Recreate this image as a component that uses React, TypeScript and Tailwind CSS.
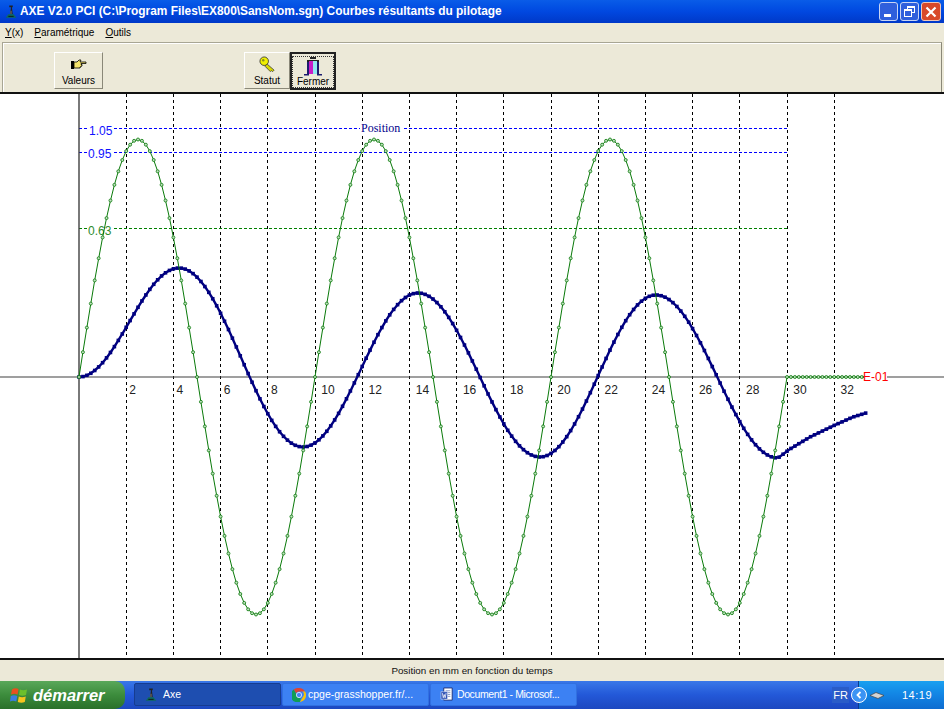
const GRID_X = 23.6;
const ORIGIN_X = 79;
const AXIS_Y = 377;
const STEP = 236 / 60;

// green curve: three sine periods, then flat to the end of the record
const greenPoints: [number, number][] = [];
for (let i = 0; i <= 200; i++) {
  const x = ORIGIN_X + i * STEP;
  if (x > 866) break;
  const y = x <= 787 ? AXIS_Y - 237.5 * Math.sin(((x - ORIGIN_X) / 236) * 2 * Math.PI) : AXIS_Y;
  greenPoints.push([x, y]);
}

// blue curve: read from its extrema, cosine between them
const extrema: [number, number][] = [
  [79, 377],
  [179, 268],
  [303, 447],
  [418, 293],
  [540, 457],
  [656, 295],
  [778, 458],
];
const tail: [number, number][] = [
  [778, 458],
  [790, 449],
  [810, 437],
  [835, 425],
  [853, 417],
  [866, 413],
];

function blueY(x: number) {
  if (x >= 778) {
    for (let i = 0; i < tail.length - 1; i++) {
      const [x0, y0] = tail[i];
      const [x1, y1] = tail[i + 1];
      if (x <= x1) return y0 + ((x - x0) / (x1 - x0)) * (y1 - y0);
    }
    return 413;
  }
  for (let i = 0; i < extrema.length - 1; i++) {
    const [x0, y0] = extrema[i];
    const [x1, y1] = extrema[i + 1];
    if (x <= x1) {
      const t = (x - x0) / (x1 - x0);
      return y0 + ((1 - Math.cos(t * Math.PI)) / 2) * (y1 - y0);
    }
  }
  return 413;
}

const bluePoints: [number, number][] = [];
for (let x = ORIGIN_X; x <= 866; x += STEP) bluePoints.push([x, blueY(x)]);

const toLine = (pts: [number, number][]) => pts.map(([x, y]) => `${x.toFixed(1)},${y.toFixed(1)}`).join(' ');

const ticks = Array.from({ length: 16 }, (_, i) => (i + 1) * 2);
const chartFont = { fontFamily: '"Liberation Sans", sans-serif' };

function Chart() {
  return (
    <svg viewBox="0 94 944 564" className="block w-full h-full">
      {ticks.map((t) => {
        const x = Math.floor(ORIGIN_X + t * GRID_X) + 0.5;
        return <line key={t} x1={x} x2={x} y1={94} y2={658} stroke="#000" strokeWidth={1} strokeDasharray="3 3" />;
      })}

      <line x1={ORIGIN_X} x2={787} y1={128.5} y2={128.5} stroke="#0000ff" strokeDasharray="3 2" />
      <line x1={ORIGIN_X} x2={787} y1={152.5} y2={152.5} stroke="#0000ff" strokeDasharray="3 2" />
      <line x1={ORIGIN_X} x2={787} y1={228.5} y2={228.5} stroke="#008000" strokeDasharray="3 2" />

      <line x1={0} x2={944} y1={AXIS_Y} y2={AXIS_Y} stroke="#404040" strokeWidth={1.2} />
      <line x1={ORIGIN_X} x2={ORIGIN_X} y1={94} y2={658} stroke="#404040" strokeWidth={1.4} />

      {ticks.map((t) => (
        <text key={t} x={ORIGIN_X + t * GRID_X + (t < 10 ? 6.5 : 13)} y={394} fontSize={12} fill="#222" textAnchor="middle" style={chartFont}>
          {t}
        </text>
      ))}

      <rect x={87} y={124} width={27} height={12} fill="#fff" />
      <text x={89} y={135} fontSize={12} fill="#1010ff" style={chartFont}>1.05</text>
      <rect x={87} y={147} width={27} height={12} fill="#fff" />
      <text x={88} y={158} fontSize={12} fill="#1010ff" style={chartFont}>0.95</text>
      <rect x={87} y={223} width={27} height={12} fill="#fff" />
      <text x={88} y={235} fontSize={12} fill="#2e8b2e" style={chartFont}>0.63</text>

      <rect x={360} y={122} width={43} height={12} fill="#fff" />
      <text x={361} y={132} fontSize={12} fill="#00008b" style={{ fontFamily: '"Liberation Serif", serif' }}>Position</text>

      <polyline points={toLine(bluePoints)} fill="none" stroke="#000080" strokeWidth={2.4} />
      {bluePoints.map(([x, y], i) => (
        <rect key={i} x={x - 1.8} y={y - 1.8} width={3.6} height={3.6} fill="#000080" />
      ))}

      <polyline points={toLine(greenPoints)} fill="none" stroke="#0a7a0a" strokeWidth={1} />
      {greenPoints.map(([x, y], i) => (
        <circle key={i} cx={x} cy={y} r={1.5} fill="#bfe0bf" stroke="#0a7a0a" strokeWidth={0.8} />
      ))}

      <rect x={864} y={371} width={23} height={12} fill="#fff" />
      <text x={863} y={381} fontSize={12} fill="#ff0000" style={chartFont}>E-01</text>
    </svg>
  );
}

function AxeIcon({ className }: { className?: string }) {
  return (
    <svg viewBox="0 0 16 16" className={className}>
      <path d="M6 1h4v2H9l1 8H7L8 3H6z" fill="#222" />
      <path d="M7 7h2v4H7z" fill="#555" />
      <path d="M2 15l3-4h6l3 4z" fill="#0d6b5c" />
      <path d="M5 13h6v1H5z" fill="#111" />
    </svg>
  );
}

function HandIcon() {
  return (
    <svg viewBox="0 0 16 12" className="w-[16px] h-[12px]">
      <path d="M0 2h3v8H0z" fill="#000" />
      <path d="M3 3h3l2-2h2l-1 2h6v1.500H10v1h1v1.500h-1v1H9v1H3z" fill="#f4e36c" stroke="#000" strokeWidth={0.8} />
    </svg>
  );
}

function KeyIcon() {
  return (
    <svg viewBox="0 0 18 18" className="w-[17px] h-[17px]">
      <path d="M8 8l8 7-1.500 1.500-1.500-1-1 1-1.500-1.500-1-1-3-3z" fill="#d8d800" stroke="#333" strokeWidth={0.8} />
      <circle cx="5.500" cy="5.500" r="4.500" fill="#f0f000" stroke="#333" strokeWidth={0.9} />
      <circle cx="4.500" cy="4.500" r="1.300" fill="#8a8a20" />
    </svg>
  );
}

function DoorIcon() {
  return (
    <svg viewBox="0 0 18 20" className="w-[18px] h-[20px]">
      <path d="M6 0h6v2H6z" fill="#222" />
      <path d="M3 3h12v2H3z" fill="#222" />
      <path d="M5 4h4v13H5z" fill="#c81ec8" />
      <path d="M9 4h4v13H9z" fill="#8fe8f0" />
      <path d="M3 5h2v12H3zM13 5h2v12h-2z" fill="#1c1c70" />
      <path d="M0 17h5v1.500H0zM13 17h5v1.500h-5z" fill="#1c1c70" />
    </svg>
  );
}

function XpFlag() {
  return (
    <svg viewBox="0 0 18 18" className="w-[18px] h-[18px]">
      <path d="M2 3.500Q5 1.500 8.500 3L7.500 8.500Q4.500 7 1 8.500z" fill="#e8501e" />
      <path d="M10 3.500Q13 5 17 3.500L16 9Q12.500 10.500 9 9z" fill="#6cc02c" />
      <path d="M0.800 10Q4 8.500 7.300 10L6.300 15.500Q3 14 0 15.500z" fill="#3a7de0" />
      <path d="M8.800 10.500Q12 12 15.800 10.500L14.800 16Q11.500 17.500 7.800 16z" fill="#f6c51e" />
    </svg>
  );
}

function ChromeIcon() {
  return (
    <svg viewBox="0 0 16 16" className="w-[14px] h-[14px]">
      <path d="M8 0a8 8 0 0 1 7 4H8a4 4 0 0 0-3.500 2L2 1.800A8 8 0 0 1 8 0z" fill="#db4437" />
      <path d="M15 4a8 8 0 0 1-6 12l3.500-6a4 4 0 0 0-.5-6z" fill="#f4c20d" />
      <path d="M2 1.800l4 7a4 4 0 0 0 4 3L9 16A8 8 0 0 1 2 1.800z" fill="#0f9d58" />
      <circle cx="8" cy="8" r="3" fill="#4285f4" stroke="#fff" strokeWidth={0.8} />
    </svg>
  );
}

function WordIcon() {
  return (
    <svg viewBox="0 0 16 16" className="w-[15px] h-[15px]">
      <path d="M4 1h9v13H4z" fill="#fff" stroke="#1b2f7a" strokeWidth={1} />
      <path d="M6 4h5M6 6h5M6 8h5M6 10h5" stroke="#6a7fb8" strokeWidth={0.8} />
      <path d="M1 5h7v8H1z" fill="#2f52b4" stroke="#d8e0f6" strokeWidth={0.6} />
      <path d="M2.500 6.500l1 5 1-3.500 1 3.500 1-5" fill="none" stroke="#fff" strokeWidth={0.8} />
    </svg>
  );
}

function ToolButton({ label, icon, className }: { label: string; icon: React.ReactNode; className?: string }) {
  return (
    <div className={`flex flex-col items-center bg-[#ece9d8] border border-t-white border-l-white border-r-[#8a8878] border-b-[#8a8878] pt-[2px] ${className ?? ''}`}>
      <div className="h-[19px] flex items-center justify-center">{icon}</div>
      <span className="text-[10px] leading-[13px] text-black">{label}</span>
    </div>
  );
}

function TaskButton({ label, icon, active, labelClass }: { label: string; icon: React.ReactNode; active?: boolean; labelClass?: string }) {
  return (
    <div
      className={`w-[147px] h-[23px] mt-[2px] flex items-center gap-[2px] pl-[9px] rounded-[2px] text-[10.500px] text-white ${
        active ? 'bg-[#1e4eb0] border border-[#163c90]' : 'bg-[#3c81f3] border border-[#3170e0]'
      }`}
    >
      {icon}
      <span className={`whitespace-nowrap ${labelClass ?? ''}`}>{label}</span>
    </div>
  );
}

export default function App() {
  return (
    <div className="w-[944px] h-[709px] overflow-hidden flex flex-col bg-[#ece9d8]" style={{ fontFamily: '"Liberation Sans", sans-serif' }}>
      {/* title bar */}
      <div className="h-[23px] shrink-0 flex items-center pl-[4px] pr-[3px] bg-gradient-to-b from-[#0a5ce8] via-[#0148e0] to-[#0038c8]">
        <AxeIcon className="w-[14px] h-[15px] shrink-0" />
        <span className="ml-[2px] text-[11.900px] font-bold text-white whitespace-nowrap">
          AXE V2.0 PCI (C:\Program Files\EX800\SansNom.sgn) Courbes résultants du pilotage
        </span>
        <div className="ml-auto flex gap-[2px]">
          <div className="w-[19px] h-[19px] rounded-[3px] border border-[#c8d4f4] bg-[#2f5fdc] flex items-end pl-[4px] pb-[3px]">
            <div className="w-[7px] h-[3px] bg-white" />
          </div>
          <div className="w-[19px] h-[19px] rounded-[3px] border border-[#c8d4f4] bg-[#2f5fdc] relative">
            <div className="absolute left-[6px] top-[3px] w-[8px] h-[7px] border border-white border-t-2" />
            <div className="absolute left-[3px] top-[6px] w-[8px] h-[8px] border border-white border-t-2 bg-[#2f5fdc]" />
          </div>
          <div className="w-[20px] h-[19px] rounded-[3px] border border-[#f0c8b8] bg-[#d8492a] flex items-center justify-center">
            <svg viewBox="0 0 12 12" className="w-[12px] h-[12px]">
              <path d="M1.500 1.500l9 9M10.500 1.500l-9 9" stroke="#fff" strokeWidth={2.200} />
            </svg>
          </div>
        </div>
      </div>

      {/* menu */}
      <div className="h-[19px] shrink-0 flex items-center gap-[11px] pl-[5px] text-[10px] text-black">
        <span><u>Y</u>(x)</span>
        <span><u>P</u>aramétrique</span>
        <span><u>O</u>utils</span>
      </div>

      {/* toolbar */}
      <div className="h-[50px] shrink-0 mx-[2px] pl-[51px] pt-[9px] flex items-start border-t border-l border-r border-t-[#a8a694] border-l-[#a8a694] border-r-[#8a8878] shadow-[inset_1px_1px_0_#fff]">
        <ToolButton label="Valeurs" icon={<HandIcon />} className="w-[49px] h-[37px]" />
        <ToolButton label="Statut" icon={<KeyIcon />} className="w-[46px] h-[37px] ml-[141px]" />
        <div className="w-[46px] h-[38px] border-2 border-[#222] flex flex-col items-center pt-[2px] bg-[#ece9d8]">
          <div className="w-full h-full mx-[1px] border border-dotted border-[#333] flex flex-col items-center justify-between">
            <DoorIcon />
            <span className="text-[10px] leading-[10px] text-black">Fermer</span>
          </div>
        </div>
      </div>

      {/* chart */}
      <div className="h-[568px] shrink-0 bg-white border-y-2 border-[#111]">
        <Chart />
      </div>

      {/* status line */}
      <div className="h-[21px] shrink-0 pt-[1px] flex items-center justify-center text-[9.800px] text-[#111]">
        Position en mm en fonction du temps
      </div>

      {/* taskbar */}
      <div className="h-[28px] shrink-0 flex items-start bg-gradient-to-b from-[#3a78e8] via-[#2358d8] to-[#1c48c0]">
        <div className="w-[125px] h-full flex items-center gap-[5px] pl-[10px] rounded-r-[10px] bg-gradient-to-b from-[#5aa85a] via-[#3c8c3c] to-[#2a702a] text-white">
          <XpFlag />
          <span className="text-[16.500px] font-bold italic">démarrer</span>
        </div>
        <div className="ml-[9px] flex gap-[1px]">
          <TaskButton label="Axe" icon={<AxeIcon className="w-[14px] h-[15px] mr-[3px]" />} active />
          <TaskButton label="cpge-grasshopper.fr/..." icon={<ChromeIcon />} />
          <TaskButton label="Document1 - Microsof..." icon={<WordIcon />} labelClass="tracking-[-0.4px]" />
        </div>
        <div className="ml-auto h-full flex items-center">
          <span className="text-[11px] text-white bg-[#2a5cc8] px-[1px] mr-[9px]">FR</span>
          <div className="w-[86px] h-full flex items-center bg-gradient-to-b from-[#1aa0f0] via-[#1284e4] to-[#0e6cd0] border-l border-[#0c3c90] relative">
            <div className="absolute -left-[8px] w-[16px] h-[16px] rounded-full bg-[#3c94f4] border border-white flex items-center justify-center">
              <svg viewBox="0 0 8 8" className="w-[8px] h-[8px]">
                <path d="M5.500 1L2.500 4l3 3" fill="none" stroke="#fff" strokeWidth={1.800} />
              </svg>
            </div>
            <svg viewBox="0 0 16 8" className="ml-[10px] w-[16px] h-[9px]">
              <path d="M1 4l6-3 8 3-6 3z" fill="#d4d4d4" stroke="#444" strokeWidth={0.7} />
            </svg>
            <span className="ml-auto mr-[12px] text-[11px] text-white tracking-[0.5px]">14:19</span>
          </div>
        </div>
      </div>
    </div>
  );
}
